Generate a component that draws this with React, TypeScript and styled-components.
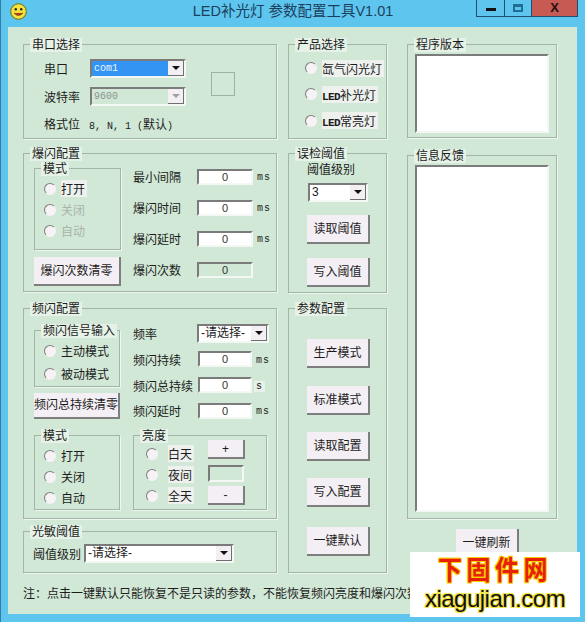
import React from 'react';
import styled, { createGlobalStyle } from 'styled-components';

const GlobalStyle = createGlobalStyle`
  html, body { margin: 0; padding: 0; background: #5ec6ee; }
  * { box-sizing: border-box; }
  body { font-family: "Liberation Sans", "Noto Sans CJK SC", sans-serif; font-size: 12px; color: #1c1c1c; }
`;

const Window = styled.div`
  position: relative;
  width: 585px;
  height: 622px;
  background: #5ec6ee;
  border-left: 1px solid #2f7fa8;
  overflow: hidden;
  display: flex;
  flex-direction: column;
`;

const TitleBar = styled.div`
  height: 27px;
  flex: none;
  display: grid;
  grid-template-columns: 1fr auto 1fr;
`;

const AppIcon = styled.svg`
  width: 17px;
  height: 17px;
  margin: 3px 0 0 9px;
`;

const Title = styled.div`
  font-size: 14.5px;
  line-height: 22px;
  color: #1d3f5f;
  white-space: nowrap;
`;

const Controls = styled.div`
  justify-self: end;
  margin-right: 7px;
  display: flex;
  height: 17px;
  border: 1px solid #1d4f70;
  border-top: none;
`;

const CtrlButton = styled.div<{ $w: number; $close?: boolean }>`
  width: ${p => p.$w}px;
  display: flex;
  align-items: center;
  justify-content: center;
  background: ${p => (p.$close ? '#c75a52' : 'transparent')};
  border-right: ${p => (p.$close ? 'none' : '1px solid #1d4f70')};
`;

const MinGlyph = styled.span`
  width: 10px;
  height: 3px;
  background: #111;
  margin-top: 3px;
`;

const MaxGlyph = styled.span`
  width: 10px;
  height: 8px;
  border: 2px solid #1d6f94;
  border-top-width: 3px;
`;

const CloseGlyph = styled.span`
  font: bold 13px/16px "Liberation Sans", sans-serif;
  color: #221111;
`;

const Client = styled.div`
  width: 569px;
  height: 587px;
  margin-left: 7px;
  padding: 17px 0 0 15px;
  background: #d2e8d6;
  display: flex;
  flex-direction: column;
`;

const Columns = styled.div`
  display: grid;
  grid-template-columns: 254px 99px 159px;
  column-gap: 11px;
  height: 529px;
`;

const Column = styled.div<{ $shift?: number }>`
  display: flex;
  flex-direction: column;
  margin-left: ${p => p.$shift ?? 0}px;
`;

const Group = styled.div<{ $h: number; $mt?: number; $pad?: string; $w?: number }>`
  position: relative;
  height: ${p => p.$h}px;
  width: ${p => (p.$w ? `${p.$w}px` : 'auto')};
  margin-top: ${p => p.$mt ?? 0}px;
  padding: ${p => p.$pad ?? '0'};
  border: 1px solid #a2b5a7;
  box-shadow: 1px 1px 0 #edf6ef;
`;

const Legend = styled.span`
  position: absolute;
  top: -7px;
  left: 6px;
  padding: 0 2px;
  font-size: 12px;
  line-height: 14px;
  background: #e6f2e8;
  white-space: nowrap;
`;

const Row = styled.div<{ $h?: number; $mb?: number }>`
  display: flex;
  align-items: center;
  height: ${p => p.$h ?? 31}px;
  margin-bottom: ${p => p.$mb ?? 0}px;
`;

const Label = styled.span<{ $w?: number }>`
  flex: none;
  width: ${p => (p.$w ? `${p.$w}px` : 'auto')};
  font-size: 12px;
  white-space: nowrap;
`;

const MonoText = styled.span`
  font-family: "Liberation Mono", monospace;
  font-size: 10px;
  white-space: nowrap;
`;

const CjkInline = styled.span`
  font-family: "Noto Sans CJK SC", sans-serif;
  font-size: 12px;
`;

const BoldLatin = styled.span`
  font-family: "Liberation Mono", monospace;
  font-size: 11px;
  font-weight: 700;
  letter-spacing: -0.6px;
`;

const Unit = styled.span<{ $lit?: boolean }>`
  margin: 2px 0 0 2px;
  padding: 0 2px;
  font-family: "Liberation Mono", monospace;
  font-size: 10px;
  letter-spacing: 1px;
  background: ${p => (p.$lit ? '#e6f2e8' : 'transparent')};
`;

const Sunken = styled.div<{ $w: number; $h?: number; $mt?: number; $off?: boolean }>`
  flex: none;
  width: ${p => p.$w}px;
  height: ${p => p.$h ?? 16}px;
  margin-top: ${p => p.$mt ?? 0}px;
  border: 2px solid;
  border-color: #7b7b7b #f4f8f4 #f4f8f4 #7b7b7b;
  background: ${p => (p.$off ? '#d2e8d6' : '#fff')};
  color: #333;
  font-size: 11px;
  line-height: 12px;
  text-align: center;
`;

const Combo = styled.div<{ $w: number; $off?: boolean; $mt?: number; $ml?: number }>`
  flex: none;
  display: flex;
  width: ${p => p.$w}px;
  height: 19px;
  margin: ${p => p.$mt ?? 0}px 0 0 ${p => p.$ml ?? 0}px;
  border: 2px solid;
  border-color: #7b7b7b #f4f8f4 #f4f8f4 #7b7b7b;
  background: ${p => (p.$off ? '#d2e8d6' : '#fff')};
`;

const ComboText = styled.div<{ $sel?: boolean; $off?: boolean; $mono?: boolean }>`
  flex: 1;
  overflow: hidden;
  padding-left: 2px;
  white-space: nowrap;
  font-family: ${p => (p.$mono ? '"Liberation Mono", monospace' : 'inherit')};
  font-size: ${p => (p.$mono ? 10 : 12)}px;
  line-height: 15px;
  color: ${p => (p.$sel ? '#eaf4ff' : p.$off ? '#8a938c' : '#1c1c1c')};
  background: ${p => (p.$sel ? '#3394f4' : 'transparent')};
`;

const ComboArrow = styled.div<{ $off?: boolean }>`
  flex: none;
  width: 16px;
  display: flex;
  align-items: center;
  justify-content: center;
  background: #f3eff3;
  border-right: 1px solid #6f6f6f;
  border-bottom: 1px solid #6f6f6f;
  &::after {
    content: '';
    border-style: solid;
    border-width: 4px 4px 0;
    border-color: ${p => (p.$off ? '#a0a0a0' : '#111')} transparent transparent;
  }
`;

const PushButton = styled.button<{ $w: number; $h?: number; $mt?: number }>`
  display: block;
  flex: none;
  width: ${p => p.$w}px;
  height: ${p => p.$h ?? 29}px;
  margin: ${p => p.$mt ?? 0}px 0 0;
  padding: 0;
  border: none;
  border-right: 2px solid #7e7e7e;
  border-bottom: 2px solid #7e7e7e;
  background: #f4eff4;
  color: #1c1c1c;
  font-family: inherit;
  font-size: 12px;
  line-height: 14px;
  white-space: nowrap;
`;

const RadioRow = styled.div<{ $h?: number; $off?: boolean }>`
  display: flex;
  align-items: center;
  height: ${p => p.$h ?? 21}px;
  color: ${p => (p.$off ? '#a9b3ab' : '#1c1c1c')};
  font-size: 12px;
  white-space: nowrap;
`;

const RadioDot = styled.span<{ $gap?: number }>`
  flex: none;
  width: 12px;
  height: 12px;
  margin-right: ${p => p.$gap ?? 5}px;
  border-radius: 50%;
  border: 1.5px solid;
  border-color: #7d7d7d #f6f2f6 #f6f2f6 #7d7d7d;
  background: #f6f2f6;
`;

const LitLabel = styled.span`
  background: #eef1ee;
  padding-right: 2px;
`;

const Radio = ({ text, off, h, lit, gap }: { text: React.ReactNode; off?: boolean; h?: number; lit?: boolean; gap?: number }) => (
  <RadioRow $off={off} $h={h}>
    <RadioDot $gap={gap} />
    {lit ? <LitLabel>{text}</LitLabel> : text}
  </RadioRow>
);

const SerialBody = styled.div`
  display: flex;
  padding: 9px 0 0 20px;
`;

const SerialRows = styled.div`
  width: 167px;
`;

const Indicator = styled.div`
  width: 24px;
  height: 24px;
  margin-top: 18px;
  border: 1px solid #9fb0a4;
`;

const Split = styled.div`
  display: flex;
  gap: 12px;
`;

const SideCol = styled.div`
  width: 87px;
  flex: none;
`;

const FormCol = styled.div`
  flex: 1;
`;

const ModeBox = styled(Group)<{ $top?: number }>`
  padding: ${p => p.$top ?? 9}px 0 0 9px;
`;

const BrightBody = styled.div`
  display: grid;
  grid-template-columns: 62px 37px;
  padding: 4px 0 0 12px;
`;

const BrightRadios = styled.div`
  padding-top: 3px;
`;

const ButtonCol = styled.div`
  display: flex;
  flex-direction: column;
`;

const CenterCol = styled.div`
  display: flex;
  flex-direction: column;
  padding-left: 18px;
`;

const RefreshSlot = styled.div`
  padding-left: 49px;
`;

const Note = styled.div`
  margin-top: 13px;
  height: 16px;
  width: 540px;
  overflow: hidden;
  font-size: 12px;
  line-height: 16px;
  white-space: nowrap;
`;

const TextArea = styled.div<{ $h: number }>`
  height: ${p => p.$h}px;
  margin: 9px 7px 0;
  background: #fff;
  border: 2px solid;
  border-color: #7b7b7b #f4f8f4 #f4f8f4 #7b7b7b;
`;

const Watermark = styled.div`
  position: absolute;
  right: 5px;
  bottom: 5px;
  width: 170px;
  height: 65px;
  background: #fff;
  text-align: center;
`;

const WatermarkCn = styled.div`
  margin-top: 4px;
  font-size: 24px;
  line-height: 30px;
  font-weight: 700;
  letter-spacing: 4.5px;
  color: #e8200a;
  transform: scaleY(1.12);
  text-shadow: 1px 1px 0 #f6d000, -1px -1px 0 #f6d000, 1px -1px 0 #f6d000, -1px 1px 0 #f6d000;
`;

const WatermarkEn = styled.div`
  font-size: 24px;
  line-height: 26px;
  letter-spacing: -0.5px;
  color: #111;
  text-shadow: 1px 1px 0 #f2e23a, -1px 1px 0 #f2e23a, 1px -1px 0 #f2e23a, -1px -1px 0 #f2e23a;
`;

const Smiley = () => (
  <AppIcon viewBox="0 0 17 17">
    <circle cx="8.5" cy="8.5" r="7.8" fill="#f5e23a" stroke="#6b6a10" strokeWidth="1" />
    <circle cx="5.8" cy="6.3" r="1.2" fill="#222" />
    <circle cx="11.2" cy="6.3" r="1.2" fill="#222" />
    <path d="M4.2 10 Q8.5 14.6 12.8 10" fill="#c2401c" stroke="#7a2a10" strokeWidth="1" />
  </AppIcon>
);

const App = () => (
  <Window>
    <GlobalStyle />
    <TitleBar>
      <Smiley />
      <Title>LED补光灯 参数配置工具V1.01</Title>
      <Controls>
        <CtrlButton $w={28}><MinGlyph /></CtrlButton>
        <CtrlButton $w={27}><MaxGlyph /></CtrlButton>
        <CtrlButton $w={45} $close><CloseGlyph>X</CloseGlyph></CtrlButton>
      </Controls>
    </TitleBar>
    <Client>
      <Columns>
        <Column>
          <Group $h={95}>
            <Legend>串口选择</Legend>
            <SerialBody>
              <SerialRows>
                <Row $h={28}>
                  <Label $w={46}>串口</Label>
                  <Combo $w={96}>
                    <ComboText $sel $mono>com1</ComboText>
                    <ComboArrow />
                  </Combo>
                </Row>
                <Row $h={28}>
                  <Label $w={46}>波特率</Label>
                  <Combo $w={96} $off>
                    <ComboText $off $mono>9600</ComboText>
                    <ComboArrow $off />
                  </Combo>
                </Row>
                <Row $h={27}>
                  <Label $w={45}>格式位</Label>
                  <MonoText>8, N, 1 (<CjkInline>默认</CjkInline>)</MonoText>
                </Row>
              </SerialRows>
              <Indicator />
            </SerialBody>
          </Group>
          <Group $h={139} $mt={14} $pad="7px 0 0 10px">
            <Legend>爆闪配置</Legend>
            <Split>
              <SideCol>
                <ModeBox $h={82} $mt={7} $w={87}>
                  <Legend>模式</Legend>
                  <Radio text="打开" lit />
                  <Radio text="关闭" off />
                  <Radio text="自动" off />
                </ModeBox>
                <PushButton $w={87} $mt={7}>爆闪次数清零</PushButton>
              </SideCol>
              <FormCol>
                <Row><Label $w={64}>最小间隔</Label><Sunken $w={56}>0</Sunken><Unit>ms</Unit></Row>
                <Row><Label $w={64}>爆闪时间</Label><Sunken $w={56}>0</Sunken><Unit>ms</Unit></Row>
                <Row><Label $w={64}>爆闪延时</Label><Sunken $w={56}>0</Sunken><Unit>ms</Unit></Row>
                <Row><Label $w={64}>爆闪次数</Label><Sunken $w={56} $off>0</Sunken></Row>
              </FormCol>
            </Split>
          </Group>
          <Group $h={211} $mt={16} $pad="14px 0 0 10px">
            <Legend>频闪配置</Legend>
            <Split>
              <SideCol>
                <ModeBox $h={57} $mt={7} $w={86} $top={8}>
                  <Legend>频闪信号输入</Legend>
                  <Radio text="主动模式" h={23} />
                  <Radio text="被动模式" h={23} />
                </ModeBox>
                <PushButton $w={86} $h={26} $mt={6}>频闪总持续清零</PushButton>
              </SideCol>
              <FormCol>
                <Row $h={20} $mb={3}>
                  <Label $w={64}>频率</Label>
                  <Combo $w={72}>
                    <ComboText>-请选择-</ComboText>
                    <ComboArrow />
                  </Combo>
                </Row>
                <Row $h={26}><Label $w={65}>频闪持续</Label><Sunken $w={54}>0</Sunken><Unit>ms</Unit></Row>
                <Row $h={26}><Label $w={65}>频闪总持续</Label><Sunken $w={54}>0</Sunken><Unit $lit>s</Unit></Row>
                <Row $h={25}><Label $w={65}>频闪延时</Label><Sunken $w={54}>0</Sunken><Unit>ms</Unit></Row>
              </FormCol>
            </Split>
            <Split>
              <SideCol>
                <ModeBox $h={75} $mt={12} $w={86}>
                  <Legend>模式</Legend>
                  <Radio text="打开" />
                  <Radio text="关闭" />
                  <Radio text="自动" />
                </ModeBox>
              </SideCol>
              <FormCol>
                <Group $h={75} $mt={12} $w={134}>
                  <Legend>亮度</Legend>
                  <BrightBody>
                    <BrightRadios>
                      <Radio text="白天" lit gap={10} />
                      <Radio text="夜间" lit gap={10} />
                      <Radio text="全天" lit gap={10} />
                    </BrightRadios>
                    <ButtonCol>
                      <PushButton $w={37} $h={19}>+</PushButton>
                      <Sunken $w={36} $h={17} $mt={6} $off />
                      <PushButton $w={37} $h={19} $mt={4}>-</PushButton>
                    </ButtonCol>
                  </BrightBody>
                </Group>
              </FormCol>
            </Split>
          </Group>
          <Group $h={42} $mt={12} $pad="12px 0 0 9px">
            <Legend>光敏阈值</Legend>
            <Row $h={19}>
              <Label $w={51}>阈值级别</Label>
              <Combo $w={150}>
                <ComboText>-请选择-</ComboText>
                <ComboArrow />
              </Combo>
            </Row>
          </Group>
        </Column>
        <Column>
          <Group $h={95} $pad="10px 0 0 16px">
            <Legend>产品选择</Legend>
            <Radio text="氙气闪光灯" h={26} lit />
            <Radio text={<><BoldLatin>LED</BoldLatin>补光灯</>} h={26} lit />
            <Radio text={<><BoldLatin>LED</BoldLatin>常亮灯</>} h={27} lit />
          </Group>
          <Group $h={140} $mt={14}>
            <Legend>误检阈值</Legend>
            <CenterCol>
              <Row $h={28}><Label>阈值级别</Label></Row>
              <Combo $w={60} $mt={1} $ml={1}>
                <ComboText>3</ComboText>
                <ComboArrow />
              </Combo>
              <PushButton $w={63} $mt={13}>读取阈值</PushButton>
              <PushButton $w={63} $mt={14}>写入阈值</PushButton>
            </CenterCol>
          </Group>
          <Group $h={265} $mt={15}>
            <Legend>参数配置</Legend>
            <CenterCol>
              <PushButton $w={63} $mt={30}>生产模式</PushButton>
              <PushButton $w={63} $mt={18}>标准模式</PushButton>
              <PushButton $w={63} $mt={17}>读取配置</PushButton>
              <PushButton $w={63} $mt={17}>写入配置</PushButton>
              <PushButton $w={63} $mt={20}>一键默认</PushButton>
            </CenterCol>
          </Group>
        </Column>
        <Column $shift={9}>
          <Group $h={94}>
            <Legend>程序版本</Legend>
            <TextArea $h={79} />
          </Group>
          <Group $h={364} $mt={17}>
            <Legend>信息反馈</Legend>
            <TextArea $h={347} />
          </Group>
          <RefreshSlot>
            <PushButton $w={63} $mt={10}>一键刷新</PushButton>
          </RefreshSlot>
        </Column>
      </Columns>
      <Note>注：点击一键默认只能恢复不是只读的参数，不能恢复频闪亮度和爆闪次数</Note>
    </Client>
    <Watermark>
      <WatermarkCn>下固件网</WatermarkCn>
      <WatermarkEn>xiagujian.com</WatermarkEn>
    </Watermark>
  </Window>
);

export default App;
